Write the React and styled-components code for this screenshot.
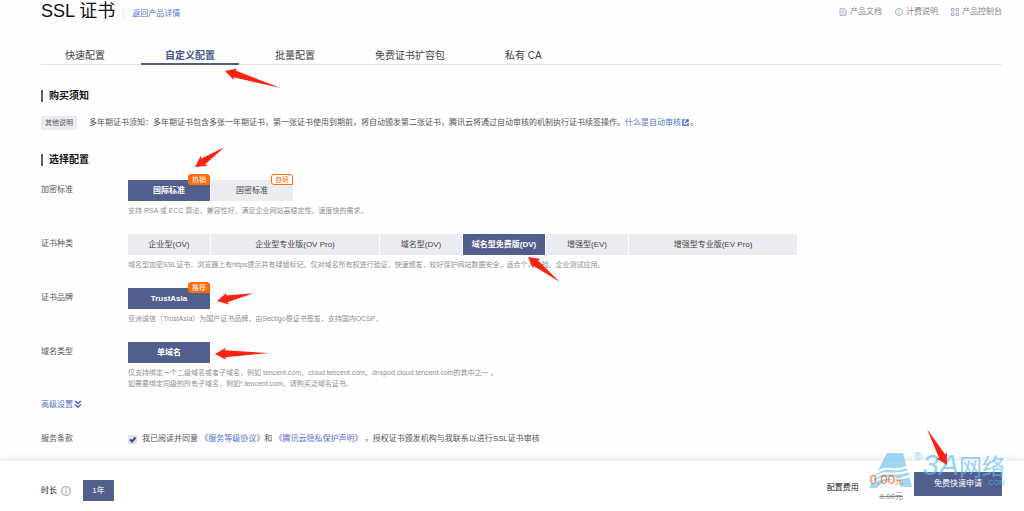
import React, { useState } from 'react';
import styled, { createGlobalStyle, css } from 'styled-components';

const TABS = ['快速配置', '自定义配置', '批量配置', '免费证书扩容包', '私有 CA'];

const ROWS = [
  {
    id: 'standard',
    label: '加密标准',
    options: [
      { name: '国际标准', badge: '热销', arrow: { x: 67, y: -13, length: 35, angle: -34 } },
      { name: '国密标准', badge: '自研', outlined: true },
    ],
    hints: ['支持 RSA 或 ECC 算法，兼容性好，满足企业网站高稳定性、速度快的需求。'],
  },
  {
    id: 'kind',
    label: '证书种类',
    options: [
      { name: '企业型(OV)' },
      { name: '企业型专业版(OV Pro)', wide: true },
      { name: '域名型(DV)' },
      { name: '域名型免费版(DV)', arrow: { x: 65, y: 23, length: 40, angle: 38 } },
      { name: '增强型(EV)' },
      { name: '增强型专业版(EV Pro)', wide: true },
    ],
    hints: [
      '域名型加密SSL证书，浏览器上有https提示并有绿锁标记。仅对域名所有权进行验证，快速颁发，较好保护网站数据安全，适合个人体验、企业测试应用。',
    ],
  },
  {
    id: 'brand',
    label: '证书品牌',
    options: [
      { name: 'TrustAsia', badge: '推荐', arrow: { x: 89, y: 13, length: 37, angle: -12 } },
    ],
    hints: ['亚洲诚信（TrustAsia）为国产证书品牌，由Sectigo根证书签发，支持国内OCSP。'],
  },
  {
    id: 'domain',
    label: '域名类型',
    options: [{ name: '单域名', arrow: { x: 87, y: 12, length: 54, angle: -1 } }],
    hints: [
      '仅支持绑定一个二级域名或者子域名，例如 tencent.com、cloud.tencent.com、dnspod.cloud.tencent.com的其中之一 。',
      '如需要绑定同级的所有子域名，例如*.tencent.com，请购买泛域名证书。',
    ],
  },
];

const Arrow = ({ x, y, length, angle }) => (
  <StyledArrow $x={x} $y={y} width="1" height="1" aria-hidden="true">
    <g transform={`rotate(${angle})`}>
      <path d={`M0 0L11 -6L10 -3.5L${length} 0L10 3.5L11 6Z`} />
    </g>
  </StyledArrow>
);

const DocIcon = () => (
  <StyledIcon viewBox="0 0 16 16" $size={8}>
    <path d="M2 1.5h9l3 3v10H2zM5 6h6M5 10h6" />
  </StyledIcon>
);

const InfoIcon = ({ size }) => (
  <StyledIcon viewBox="0 0 16 16" $size={size}>
    <circle cx="8" cy="8" r="7" />
    <path d="M8 3.5v2M8 7v5.5" />
  </StyledIcon>
);

const GridIcon = () => (
  <StyledIcon viewBox="0 0 16 16" $size={8}>
    <path d="M1 1h5v5h-5zM10 1h5v5h-5zM1 10h5v5h-5zM10 10h5v5h-5z" />
  </StyledIcon>
);

const OptionRow = ({ row, value, onSelect }) => (
  <StyledRow>
    <StyledLabel id={row.id}>{row.label}</StyledLabel>
    <div>
      <StyledOptions role="group" aria-labelledby={row.id}>
        {row.options.map(option => (
          <StyledCell key={option.name}>
            <StyledOption
              type="button"
              $wide={option.wide}
              $active={option.name === value}
              aria-pressed={option.name === value}
              onClick={() => onSelect(option.name)}
            >
              {option.name}
            </StyledOption>
            {option.badge && (
              <StyledBadge $outlined={option.outlined}>{option.badge}</StyledBadge>
            )}
            {option.arrow && <Arrow {...option.arrow} />}
          </StyledCell>
        ))}
      </StyledOptions>
      <StyledHint>
        {row.hints.map(hint => (
          <p key={hint}>{hint}</p>
        ))}
      </StyledHint>
    </div>
  </StyledRow>
);

const Watermark = () => (
  <StyledWatermark aria-hidden="true">
    <svg width="46" height="36" viewBox="0 0 44 36">
      <path d="M18 0H34L43 34H32L30 28C22 24 14 28 8 35H0Z" fill="#6cc3ee" />
      <path
        d="M8 20C17 11 24 20 38 14M6 25C16 15 25 25 39 18M4 30C15 20 26 29 41 23"
        fill="none"
        stroke="#fff"
        strokeWidth="2"
      />
    </svg>
    <StyledMark>®</StyledMark>
    <StyledBrand>
      <b>
        <i>3A</i>网络
      </b>
      <small>.COM</small>
    </StyledBrand>
  </StyledWatermark>
);

const App = () => {
  const [tab, setTab] = useState('自定义配置');
  const [agreed, setAgreed] = useState(true);
  const [values, setValues] = useState({
    standard: '国际标准',
    kind: '域名型免费版(DV)',
    brand: 'TrustAsia',
    domain: '单域名',
  });

  return (
    <StyledPage>
      <GlobalStyle />
      <StyledMain>
        <StyledHeader>
          <h1>SSL 证书</h1>
          <StyledBack href="#detail">返回产品详情</StyledBack>
          <StyledNav>
            <a href="#docs">
              <DocIcon />
              产品文档
            </a>
            <a href="#billing">
              <InfoIcon size={8} />
              计费说明
            </a>
            <a href="#console">
              <GridIcon />
              产品控制台
            </a>
          </StyledNav>
        </StyledHeader>

        <StyledTabs>
          {TABS.map(name => (
            <StyledTab
              key={name}
              type="button"
              $active={name === tab}
              onClick={() => setTab(name)}
            >
              {name}
            </StyledTab>
          ))}
          <Arrow x={184} y={23} length={58} angle={17} />
        </StyledTabs>

        <StyledHeading>购买须知</StyledHeading>
        <StyledNotice>
          <StyledTag>其他说明</StyledTag>
          <p>
            多年期证书须知：多年期证书包含多张一年期证书，第一张证书使用到期前，将自动颁发第二张证书，腾讯云将通过自动审核的机制执行证书续签操作。
            <a href="#review">
              什么是自动审核
              <StyledLinkIcon viewBox="0 0 16 16" $size={7}>
                <path d="M7 2H2v12h12V9M9 2h5v5M14 2L7 9" />
              </StyledLinkIcon>
            </a>
            。
          </p>
        </StyledNotice>

        <StyledHeading>选择配置</StyledHeading>
        {ROWS.map(row => (
          <OptionRow
            key={row.id}
            row={row}
            value={values[row.id]}
            onSelect={name => setValues({ ...values, [row.id]: name })}
          />
        ))}

        <StyledAdvanced href="#advanced">
          高级设置
          <StyledLinkIcon viewBox="0 0 16 16" $size={8}>
            <path d="M2 2l6 5l6-5M2 9l6 5l6-5" />
          </StyledLinkIcon>
        </StyledAdvanced>

        <StyledTerms>
          <StyledTermsLabel>服务条款</StyledTermsLabel>
          <StyledCheck>
            <input
              id="agree"
              type="checkbox"
              checked={agreed}
              onChange={e => setAgreed(e.target.checked)}
            />
            {agreed && (
              <svg viewBox="0 0 9 9" aria-hidden="true">
                <path d="M2 4.5L4 6.5L7.5 2.5" />
              </svg>
            )}
          </StyledCheck>
          <label htmlFor="agree">
            我已阅读并同意 <a href="#sla">《服务等级协议》</a>和{' '}
            <a href="#privacy">《腾讯云隐私保护声明》</a>
            {' '}，授权证书颁发机构与我联系以进行SSL证书审核
          </label>
        </StyledTerms>
      </StyledMain>

      <StyledFooter>
        <StyledDuration>
          时长
          <InfoIcon size={10} />
          <StyledYear type="button">1年</StyledYear>
        </StyledDuration>
        <StyledCost>
          <span>配置费用</span>
          <StyledPrice>
            <strong>
              0.00<small>元</small>
            </strong>
            <del>0.00元</del>
          </StyledPrice>
          <StyledSubmit type="button">免费快速申请</StyledSubmit>
        </StyledCost>
        <Watermark />
        <StyledCorner>
          <Arrow x={0} y={0} length={41} angle={-119} />
        </StyledCorner>
      </StyledFooter>
    </StyledPage>
  );
};

const GlobalStyle = createGlobalStyle`
  * {
    box-sizing: border-box;
  }

  body {
    margin: 0;
    background: #fefefe;
    color: #555;
    font: 8px/12px 'Liberation Sans', 'Noto Sans CJK SC', sans-serif;
  }

  h1, h2, p {
    margin: 0;
  }

  a {
    color: #5672cf;
    text-decoration: none;
  }

  button {
    padding: 0;
    border: 0;
    font: inherit;
    cursor: pointer;
  }
`;

const StyledPage = styled.div`
  display: flex;
  flex-direction: column;
  min-height: 100vh;
  overflow: hidden;
`;

const StyledMain = styled.main`
  flex: 1;
  padding: 0 22px 16px 41px;
`;

const StyledHeader = styled.header`
  display: flex;
  align-items: center;
  height: 22px;
  margin-bottom: 26px;

  h1 {
    color: #111;
    font-size: 18px;
    font-weight: 400;
    line-height: 22px;
  }
`;

const StyledBack = styled.a`
  margin: 6px 0 0 8px;
  padding-left: 8px;
  border-left: 1px solid #e6e8ef;
  line-height: 10px;
`;

const StyledNav = styled.nav`
  display: flex;
  gap: 13px;
  margin: 2px 0 0 auto;

  a {
    display: flex;
    align-items: center;
    gap: 3px;
    color: #888;
  }
`;

const StyledIcon = styled.svg`
  flex: none;
  width: ${({ $size }) => $size}px;
  height: ${({ $size }) => $size}px;
  fill: none;
  stroke: #a3afc7;
  stroke-width: 2;
`;

const StyledLinkIcon = styled(StyledIcon)`
  margin: 0 1px;
  stroke: #4565cc;
  stroke-width: 3;
  vertical-align: -1px;
`;

const StyledArrow = styled.svg`
  position: absolute;
  z-index: 3;
  left: ${({ $x }) => $x}px;
  top: ${({ $y }) => $y}px;
  overflow: visible;
  fill: #ff2213;
  pointer-events: none;
`;

const StyledTabs = styled.div`
  position: relative;
  display: flex;
  gap: 12px;
  margin-bottom: 25px;
  border-bottom: 1px solid #e3e5ee;
`;

const StyledTab = styled.button`
  height: 17px;
  margin-bottom: -1px;
  padding: 0 24px;
  border-bottom: 2px solid transparent;
  background: none;
  color: #444;
  font-size: 10px;
  line-height: 15px;

  ${({ $active }) =>
    $active &&
    css`
      border-color: #525f8c;
      color: #46558a;
      font-weight: bold;
    `}
`;

const StyledHeading = styled.h2`
  margin-bottom: 14px;
  padding-left: 6px;
  border-left: 2px solid #525f8c;
  color: #111;
  font-size: 10px;
  line-height: 12px;
`;

const StyledNotice = styled.div`
  display: flex;
  align-items: center;
  gap: 12px;
  margin-bottom: 24px;
`;

const StyledTag = styled.span`
  flex: none;
  padding: 0 4px;
  background: #ebecf2;
  font-size: 7px;
  line-height: 14px;
`;

const StyledRow = styled.div`
  display: flex;
  margin-bottom: 18px;
`;

const StyledLabel = styled.div`
  flex: none;
  width: 87px;
  padding-top: 4px;
`;

const StyledOptions = styled.div`
  display: flex;
  gap: 1px;
`;

const StyledCell = styled.div`
  position: relative;
`;

const StyledOption = styled.button`
  display: block;
  width: ${({ $wide }) => ($wide ? 168 : 82)}px;
  height: 21px;
  background: ${({ $active }) => ($active ? '#525f8c' : '#ebecf2')};
  color: ${({ $active }) => ($active ? '#fff' : '#444')};
  font-weight: ${({ $active }) => ($active ? 'bold' : 'normal')};
`;

const StyledBadge = styled.span`
  position: absolute;
  top: -6px;
  right: 0;
  width: 22px;
  height: 11px;
  border: 1px solid #ff6a0a;
  border-radius: 3px 3px 0 3px;
  background: ${({ $outlined }) => ($outlined ? '#fff' : '#ff6a0a')};
  color: ${({ $outlined }) => ($outlined ? '#ff6a0a' : '#fff')};
  font-size: 7px;
  line-height: 9px;
  text-align: center;
`;

const StyledHint = styled.div`
  margin-top: 4px;
  color: #909090;
  font-size: 7px;
  line-height: 11px;
`;

const StyledAdvanced = styled.a`
  display: block;
  margin: -8px 0 22px;
`;

const StyledTerms = styled.div`
  display: flex;
  align-items: center;
`;

const StyledTermsLabel = styled.span`
  width: 87px;
`;

const StyledCheck = styled.span`
  position: relative;
  width: 9px;
  height: 9px;
  margin-right: 5px;

  input {
    display: block;
    appearance: none;
    width: 9px;
    height: 9px;
    margin: 0;
    background: #dfe2ee;
  }

  svg {
    position: absolute;
    inset: 0;
    fill: none;
    stroke: #3c4a80;
    stroke-width: 2;
    pointer-events: none;
  }
`;

const StyledFooter = styled.footer`
  position: relative;
  display: flex;
  justify-content: space-between;
  align-items: flex-start;
  min-height: 50px;
  padding: 11px 22px 7px 41px;
  background: #fff;
  box-shadow: 0 -2px 6px rgba(60, 70, 110, 0.12);
  color: #222;
`;

const StyledDuration = styled.div`
  display: flex;
  align-items: center;
  gap: 4px;
  margin-top: 8px;
`;

const StyledYear = styled.button`
  width: 31px;
  height: 21px;
  margin-left: 8px;
  background: #525f8c;
  color: #fff;
`;

const StyledCost = styled.div`
  display: flex;
  align-items: center;
  gap: 11px;
`;

const StyledPrice = styled.div`
  position: relative;
  z-index: 2;
  display: flex;
  flex-direction: column;
  align-items: flex-end;
  gap: 3px;

  strong {
    color: #f0722e;
    font-size: 13px;
    font-weight: 400;
  }

  small {
    font-size: 8px;
  }

  del {
    color: #888;
  }
`;

const StyledSubmit = styled.button`
  width: 88px;
  height: 24px;
  margin-bottom: 8px;
  background: #525f8c;
  color: #fff;
`;

const StyledCorner = styled.div`
  position: absolute;
  top: 4px;
  right: 77px;
`;

const StyledWatermark = styled.div`
  position: absolute;
  z-index: 1;
  right: 19px;
  top: -8px;
  display: flex;
  color: #55c0f2;
  opacity: 0.65;
  pointer-events: none;
`;

const StyledMark = styled.span`
  width: 8px;
  font-size: 10px;
  line-height: 8px;
`;

const StyledBrand = styled.div`
  display: flex;
  flex-direction: column;
  align-items: flex-end;

  b {
    font-size: 23px;
    font-weight: 400;
    line-height: 24px;
  }

  i {
    font-size: 30px;
  }

  small {
    font-size: 7px;
    line-height: 8px;
  }
`;

export default App;
